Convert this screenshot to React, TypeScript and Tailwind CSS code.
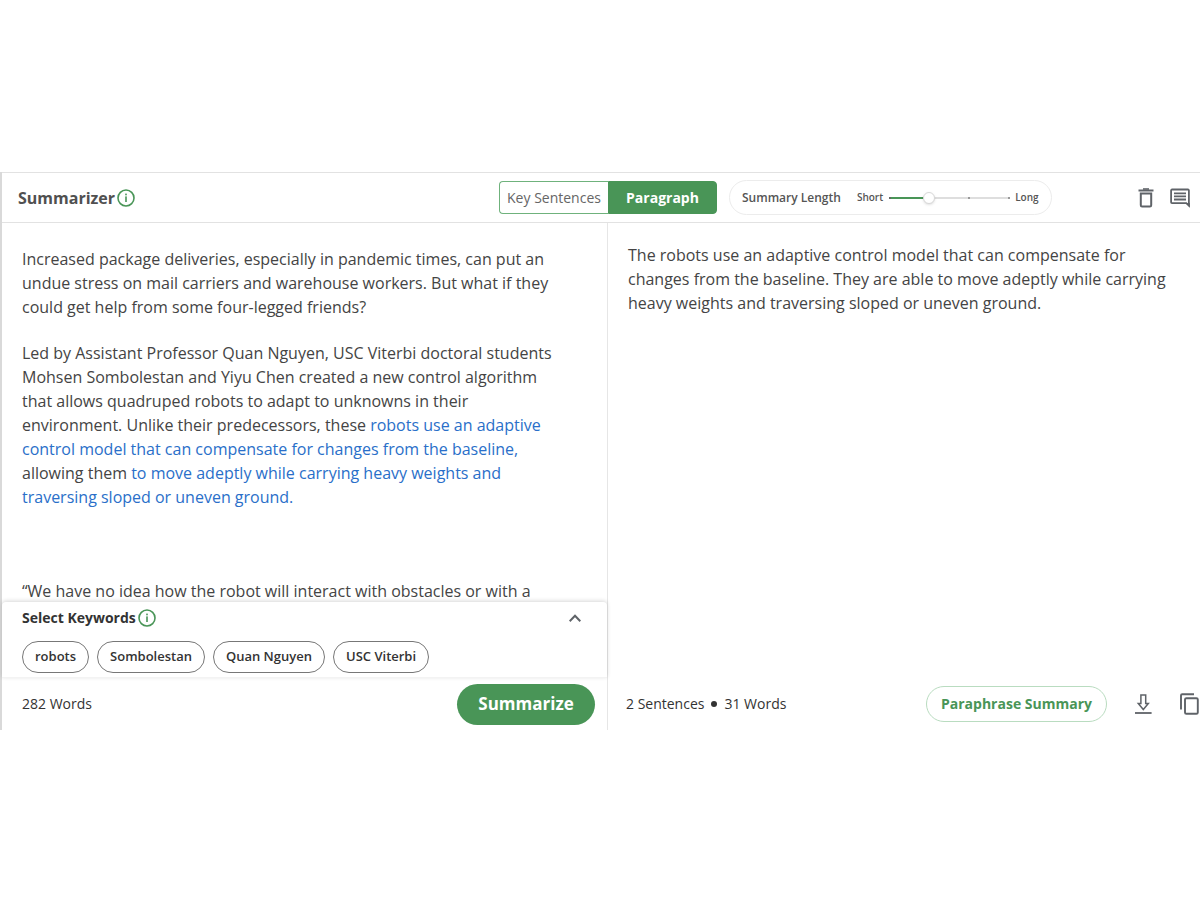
import React, { useState } from "react";

const KEYWORDS = ["robots", "Sombolestan", "Quan Nguyen", "USC Viterbi"];

function InfoIcon() {
  return (
    <svg width="18" height="18" viewBox="0 0 18 18" fill="none" aria-hidden="true">
      <circle cx="9" cy="9" r="8" stroke="#499557" strokeWidth="1.6" />
      <rect x="8.2" y="7.4" width="1.6" height="5.6" fill="#499557" />
      <rect x="8.2" y="4.6" width="1.6" height="1.7" fill="#499557" />
    </svg>
  );
}

function TrashIcon() {
  return (
    <svg width="16" height="20" viewBox="0 0 16 20" fill="none" stroke="#5f6368" strokeWidth="2" aria-hidden="true">
      <path d="M0.5 2.5h15" />
      <path d="M5 1h6" strokeWidth="1.6" />
      <path d="M2.8 5.6h10.4v11.6a1.3 1.3 0 0 1-1.3 1.3H4.1a1.3 1.3 0 0 1-1.3-1.3z" />
    </svg>
  );
}

function CommentIcon() {
  return (
    <svg width="20" height="20" viewBox="0 0 20 20" fill="none" stroke="#5f6368" aria-hidden="true">
      <path d="M2 1.5h16a.9.9 0 0 1 .9.9v15.2l-2.6-2.5H2a.9.9 0 0 1-.9-.9V2.4a.9.9 0 0 1 .9-.9z" strokeWidth="1.8" />
      <path d="M16 15h3.8v4.5z" fill="#5f6368" stroke="none" />
      <path d="M4 5.3h12M4 8.4h12M4 11.5h12" strokeWidth="1.8" />
    </svg>
  );
}

function DownloadIcon() {
  return (
    <svg width="17" height="20" viewBox="0 0 17 20" fill="none" stroke="#5f6368" strokeWidth="1.5" aria-hidden="true">
      <path d="M5.9 1h4.8v8.6h2.6L8.3 15.6 3.3 9.6h2.6z" />
      <path d="M0 19h16.6" strokeWidth="1.8" />
    </svg>
  );
}

function CopyIcon() {
  return (
    <svg width="19" height="22" viewBox="0 0 19 22" fill="none" stroke="#5f6368" strokeWidth="1.9" aria-hidden="true">
      <path d="M14 1.2H2.2A1.2 1.2 0 0 0 1 2.4v14" />
      <rect x="5" y="5.2" width="12.8" height="15.6" rx="1.4" />
    </svg>
  );
}

function LengthSlider() {
  const [length, setLength] = useState(1);
  const fill = 6 + length * 40;

  return (
    <div className="flex h-[35px] items-center rounded-full border border-[#ececec] px-3 font-semibold text-[#555]">
      <label htmlFor="summary-length" className="text-xs">
        Summary Length
      </label>
      <span className="ml-4 text-[10px]">Short</span>
      <input
        id="summary-length"
        type="range"
        min={0}
        max={3}
        value={length}
        onChange={(e) => setLength(Number(e.target.value))}
        className="h-3 w-[132px] appearance-none bg-transparent [&::-webkit-slider-thumb]:h-3 [&::-webkit-slider-thumb]:w-3 [&::-webkit-slider-thumb]:appearance-none [&::-webkit-slider-thumb]:rounded-full [&::-webkit-slider-thumb]:border [&::-webkit-slider-thumb]:border-[#d8d8d8] [&::-webkit-slider-thumb]:bg-white [&::-webkit-slider-thumb]:shadow-sm"
        style={{
          // step marks sit on top of the filled and the empty part of the track
          background: [
            "linear-gradient(#666, #666) 6px 50% / 2px 2px no-repeat",
            "linear-gradient(#999, #999) 85px 50% / 2px 2px no-repeat",
            "linear-gradient(#999, #999) 125px 50% / 2px 2px no-repeat",
            `linear-gradient(to right, transparent 6px, #499557 6px ${fill}px, #dedede ${fill}px 126px, transparent 126px) 0 50% / 100% 2px no-repeat`,
          ].join(", "),
        }}
      />
      <span className="text-[10px]">Long</span>
    </div>
  );
}

export default function App() {
  const [mode, setMode] = useState<"sentences" | "paragraph">("paragraph");
  const [keywordsOpen, setKeywordsOpen] = useState(true);

  const modeClass = (active: boolean) =>
    active
      ? "border-[#499557] bg-[#499557] font-bold text-white"
      : "border-[#6fb27c] bg-white text-[#666]";

  return (
    <div className="min-h-screen bg-white py-43 font-['Open_Sans',sans-serif] text-[#333]">
      <main className="border-l-2 border-[#d9d9d9]">
        <header className="grid h-[51px] grid-cols-[606fr_592fr] border-y border-[#e2e2e2]">
          <div className="flex items-center justify-between pl-4">
            <h1 className="flex items-center gap-0.5 text-base font-bold text-[#505050]">
              Summarizer
              <button aria-label="About the summarizer">
                <InfoIcon />
              </button>
            </h1>
            <button
              aria-pressed={mode === "sentences"}
              onClick={() => setMode("sentences")}
              className={`h-[33px] w-[109px] rounded-l border border-r-0 text-sm whitespace-nowrap ${modeClass(mode === "sentences")}`}
            >
              Key Sentences
            </button>
          </div>
          <div className="flex items-center">
            <button
              aria-pressed={mode === "paragraph"}
              onClick={() => setMode("paragraph")}
              className={`h-[33px] w-[109px] rounded-r border text-sm ${modeClass(mode === "paragraph")}`}
            >
              Paragraph
            </button>
            <div className="ml-3">
              <LengthSlider />
            </div>
            <div className="ml-auto flex items-center gap-4 pr-2.5">
              <button aria-label="Clear text">
                <TrashIcon />
              </button>
              <button aria-label="Feedback">
                <CommentIcon />
              </button>
            </div>
          </div>
        </header>

        <div className="grid grid-cols-[606fr_592fr]">
          <section className="flex flex-col border-r border-[#e6e6e6]">
            <div className="h-[379px] overflow-hidden pt-6 pr-12 pl-5 text-base text-[#444]">
              <p>
                Increased package deliveries, especially in pandemic times, can put an undue stress
                on mail carriers and warehouse workers. But what if they could get help from some
                four-legged friends?
              </p>
              <p className="mt-[22px]">
                Led by Assistant Professor Quan Nguyen, USC Viterbi doctoral students Mohsen
                Sombolestan and Yiyu Chen created a new control algorithm that allows quadruped
                robots to adapt to unknowns in their environment. Unlike their predecessors, these{" "}
                <span className="text-[#2a6fc9]">
                  robots use an adaptive control model that can compensate for changes from the
                  baseline,
                </span>{" "}
                allowing them{" "}
                <span className="text-[#2a6fc9]">
                  to move adeptly while carrying heavy weights and traversing sloped or uneven
                  ground.
                </span>
              </p>
              <p className="mt-[70px]">
                “We have no idea how the robot will interact with obstacles or with a
              </p>
            </div>

            <div className="relative rounded-t border-b border-[#f3f3f3] bg-white px-5 pt-[5px] pb-1 shadow-[0_-1px_4px_rgba(0,0,0,0.16)]">
              <div className="flex h-[22px] items-center justify-between">
                <h2 className="flex items-center gap-0.5 text-sm font-bold text-[#333]">
                  Select Keywords
                  <button aria-label="About keywords">
                    <InfoIcon />
                  </button>
                </h2>
                <button
                  aria-label="Toggle keywords"
                  aria-expanded={keywordsOpen}
                  onClick={() => setKeywordsOpen(!keywordsOpen)}
                  className="mr-1.5"
                >
                  <svg width="12" height="8" viewBox="0 0 12 8" fill="none" stroke="#5f6368" strokeWidth="2" aria-hidden="true">
                    <path d="M0.7 7.2 6 1.8l5.3 5.4" />
                  </svg>
                </button>
              </div>
              {keywordsOpen && (
                <div className="mt-3 flex gap-2">
                  {KEYWORDS.map((keyword) => (
                    <button
                      key={keyword}
                      className="h-8 rounded-full border border-[#777] px-3 text-[13px] font-semibold whitespace-nowrap text-[#333]"
                    >
                      {keyword}
                    </button>
                  ))}
                </div>
              )}
            </div>

            <footer className="flex h-[52px] items-center justify-between pr-3 pl-5">
              <span className="text-sm font-medium">282 Words</span>
              <button className="h-[41px] w-[138px] rounded-full bg-[#499557] text-[17px] font-bold text-white">
                Summarize
              </button>
            </footer>
          </section>

          <section className="flex flex-col">
            <p className="flex-1 pt-5 pr-6 pl-5 text-base text-[#444]">
              The robots use an adaptive control model that can compensate for changes from the
              baseline. They are able to move adeptly while carrying heavy weights and traversing
              sloped or uneven ground.
            </p>
            <footer className="flex h-[52px] items-center pr-px pl-[18px]">
              <span className="flex items-center gap-[7px] text-sm font-medium">
                2 Sentences
                <span className="h-1.5 w-1.5 rounded-full bg-[#333]" />
                31 Words
              </span>
              <div className="ml-auto flex items-center gap-7">
                <button className="h-9 rounded-full border border-[#b9dcc0] px-3.5 text-sm font-bold text-[#499557]">
                  Paraphrase Summary
                </button>
                <button aria-label="Download">
                  <DownloadIcon />
                </button>
                <button aria-label="Copy">
                  <CopyIcon />
                </button>
              </div>
            </footer>
          </section>
        </div>
      </main>
    </div>
  );
}
